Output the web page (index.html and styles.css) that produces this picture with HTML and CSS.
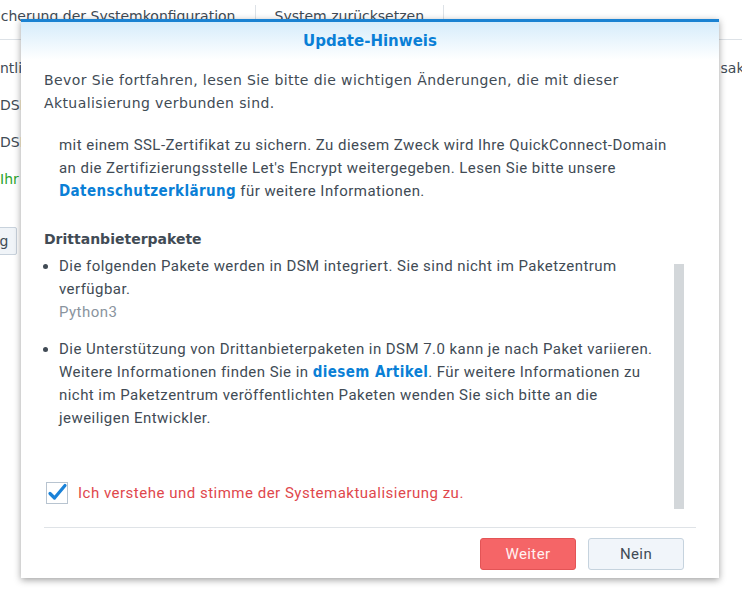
FILE: index.html
```html
<!DOCTYPE html>
<html lang="de">
<head>
<meta charset="utf-8">
<title>Update-Hinweis</title>
<link rel="stylesheet" href="styles.css">
</head>
<body>
<div class="page">
  <div class="tabs">
    <div class="tab tab-first">Sicherung der Systemkonfiguration</div>
    <div class="tab">System zurücksetzen</div>
  </div>
  <div class="rows">
    <div class="row"><span class="cut">ntlich</span><span class="right">sakt</span></div>
    <div class="row"><span class="cut">DSM</span></div>
    <div class="row"><span class="cut">DSM</span></div>
    <div class="row green"><span class="cut">Ihr</span></div>
    <div class="row btnrow"><span class="bgbtn">Einstellung</span></div>
  </div>
</div>

<div class="dialog">
  <div class="dlg-head">Update-Hinweis</div>
  <div class="dlg-body">
    <p class="intro">Bevor Sie fortfahren, lesen Sie bitte die wichtigen Änderungen, die mit dieser Aktualisierung verbunden sind.</p>
    <div class="scroll">
      <p class="cont">mit einem SSL-Zertifikat zu sichern. Zu diesem Zweck wird Ihre QuickConnect-Domain an die Zertifizierungsstelle Let's Encrypt weitergegeben. Lesen Sie bitte unsere <a class="link">Datenschutzerklärung</a> für weitere Informationen.</p>
      <h3 class="sub">Drittanbieterpakete</h3>
      <ul class="list">
        <li>Die folgenden Pakete werden in DSM integriert. Sie sind nicht im Paketzentrum verfügbar.<span class="pkg">Python3</span></li>
        <li>Die Unterstützung von Drittanbieterpaketen in DSM 7.0 kann je nach Paket variieren. Weitere Informationen finden Sie in <a class="link">diesem Artikel</a>. Für weitere Informationen zu nicht im Paketzentrum veröffentlichten Paketen wenden Sie sich bitte an die jeweiligen Entwickler.</li>
      </ul>
      <label class="agree">
        <span class="box"><svg width="22" height="22" viewBox="0 0 22 22"><path d="M4 11.5 L8.5 16 L19 3.5" fill="none" stroke="#1a82d8" stroke-width="3.2" stroke-linecap="round" stroke-linejoin="round"/></svg></span>
        <span class="agree-text">Ich verstehe und stimme der Systemaktualisierung zu.</span>
      </label>
      <div class="thumb"></div>
    </div>
  </div>
  <div class="dlg-foot">
    <button class="btn btn-red">Weiter</button>
    <button class="btn btn-plain">Nein</button>
  </div>
</div>
</body>
</html>
```
FILE: styles.css
```css
html, body {
  margin: 0;
  padding: 0;
}
body {
  width: 742px;
  height: 600px;
  overflow: hidden;
  background: #ffffff;
  font-family: "DejaVu Sans", Verdana, sans-serif;
  color: #414b55;
  position: relative;
}
.page {
  width: 742px;
}
.tabs {
  display: flex;
  height: 39px;
  border-bottom: 1px solid #dde2e7;
  margin-left: -12px;
}
.tab {
  font-size: 14px;
  padding: 3px 19px 0 19px;
  border-right: 1px solid #dde2e7;
  margin-top: 5px;
  color: #414b55;
  white-space: nowrap;
}
.tab-first {
  padding-left: 0;
}
.rows {
  padding-top: 19px;
}
.row {
  display: flex;
  justify-content: space-between;
  height: 37px;
  font-size: 14px;
  line-height: 18px;
  white-space: nowrap;
}
.row .right {
  margin-right: -8px;
}
.green {
  color: #2da52d;
}
.btnrow {
  padding-top: 20px;
}
.bgbtn {
  display: inline-block;
  margin-left: -78px;
  height: 26px;
  line-height: 26px;
  padding: 0 8px;
  border: 1px solid #c8d2dc;
  background: #f0f4f8;
  border-radius: 2px;
  font-size: 14px;
}

.dialog {
  position: absolute;
  left: 21px;
  top: 19px;
  width: 698px;
  height: 559px;
  background: #ffffff;
  border-top: 3px solid #1a82d2;
  box-sizing: border-box;
  box-shadow: 0 2px 7px rgba(0, 0, 0, 0.38);
  display: flex;
  flex-direction: column;
}
.dlg-head {
  height: 38px;
  line-height: 38px;
  text-align: center;
  font-weight: bold;
  font-size: 15px;
  color: #0a7fd6;
  background: linear-gradient(#d6ecfb, #ffffff);
}
.dlg-body {
  flex: 1;
  padding: 9px 23px 0 23px;
}
.intro {
  margin: 0;
  font-size: 14px;
  letter-spacing: 0.4px;
  line-height: 23px;
}
.scroll {
  position: relative;
  margin-top: 19px;
  height: 381px;
}
.cont {
  margin: 0;
  padding: 0 20px 0 15px;
  font-family: Roboto, "DejaVu Sans", sans-serif;
  font-size: 15px;
  letter-spacing: 0.45px;
  line-height: 23px;
}
.link {
  font-family: "DejaVu Sans Condensed", "DejaVu Sans", sans-serif;
  letter-spacing: 0.4px;
  color: #0a7fd6;
  font-weight: bold;
  text-decoration: none;
}
.sub {
  margin: 25px 0 0 0;
  font-size: 14px;
  line-height: 23px;
  font-weight: bold;
}
.list {
  margin: 4px 0 0 0;
  padding: 0 0 0 15px;
  font-family: Roboto, "DejaVu Sans", sans-serif;
  font-size: 15px;
  letter-spacing: 0.45px;
  line-height: 23px;
}
.list li {
  margin-bottom: 14px;
  padding-right: 26px;
}
.pkg {
  display: block;
  color: #8a949e;
}
.agree {
  display: flex;
  align-items: center;
  gap: 10px;
  margin-top: 52px;
  margin-left: 2px;
}
.box {
  width: 20px;
  height: 20px;
  border: 1px solid #b8c4d0;
  display: flex;
  align-items: center;
  justify-content: center;
  background: #fff;
}
.box svg {
  flex: none;
}
.agree-text {
  font-family: Roboto, "DejaVu Sans", sans-serif;
  font-size: 15px;
  letter-spacing: 0.5px;
  color: #e0474c;
}
.thumb {
  position: absolute;
  right: 12px;
  top: 130px;
  width: 10px;
  height: 245px;
  background: #d3d7da;
}
.dlg-foot {
  margin: 0 23px;
  border-top: 1px solid #dfe3e7;
  height: 51px;
  display: flex;
  justify-content: flex-end;
  align-items: flex-start;
  padding: 10px 12px 0 0;
  gap: 12px;
  box-sizing: border-box;
}
.btn {
  height: 32px;
  width: 96px;
  font-family: Roboto, "DejaVu Sans", sans-serif;
  font-size: 15px;
  letter-spacing: 0.4px;
  border-radius: 3px;
  padding: 0;
}
.btn-red {
  background: #f56567;
  border: 1px solid #e35456;
  color: #fff1f1;
}
.btn-plain {
  background: #f1f5fa;
  border: 1px solid #c6d3de;
  color: #414b55;
}
```
